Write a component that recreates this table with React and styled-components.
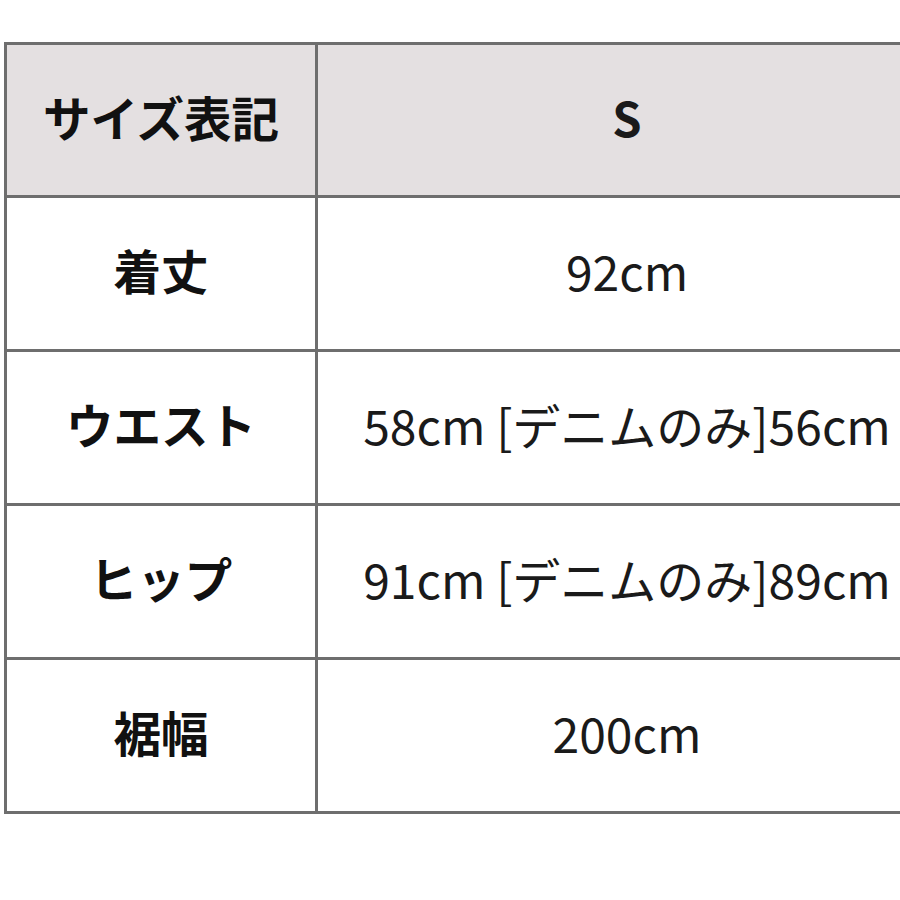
import React from "react";
import styled, { createGlobalStyle } from "styled-components";

const GlobalStyle = createGlobalStyle`
  html, body {
    margin: 0;
    padding: 0;
    background: #ffffff;
    overflow: hidden;
  }
  body {
    font-family: "Noto Sans CJK JP", "Noto Sans", sans-serif;
    color: #1a1a1a;
  }
`;

const Page = styled.div`
  width: 900px;
  height: 900px;
  padding: 42px 0 0 4px;
  box-sizing: border-box;
  overflow: hidden;
`;

// track sizes include each cell's 3px right/bottom border
const Table = styled.div`
  display: grid;
  grid-template-columns: 311px 621px;
  grid-template-rows: 153px repeat(4, 154px);
  width: max-content;
  border-top: 3px solid #6e6e6e;
  border-left: 3px solid #6e6e6e;
`;

const Cell = styled.div`
  display: flex;
  align-items: center;
  justify-content: center;
  padding-bottom: 8px;
  border-right: 3px solid #6e6e6e;
  border-bottom: 3px solid #6e6e6e;
  background: ${(p) => (p.$head ? "#e4e0e1" : "#ffffff")};
  white-space: nowrap;
`;

const Label = styled.span`
  font-size: 47.5px;
  font-weight: 700;
  color: #111;
`;

const Value = styled.span`
  font-size: ${(p) => (p.$head ? "47px" : "48px")};
  font-weight: ${(p) => (p.$head ? 700 : 400)};
  color: #1a1a1a;
`;

const rows = [
  ["着丈", "92cm"],
  ["ウエスト", "58cm [デニムのみ]56cm"],
  ["ヒップ", "91cm [デニムのみ]89cm"],
  ["裾幅", "200cm"],
];

export default function App() {
  return (
    <>
      <GlobalStyle />
      <Page>
        <Table>
          <Cell $head>
            <Label>サイズ表記</Label>
          </Cell>
          <Cell $head>
            <Value $head>S</Value>
          </Cell>
          {rows.map(([label, value]) => (
            <React.Fragment key={label}>
              <Cell>
                <Label>{label}</Label>
              </Cell>
              <Cell>
                <Value>{value}</Value>
              </Cell>
            </React.Fragment>
          ))}
        </Table>
      </Page>
    </>
  );
}
